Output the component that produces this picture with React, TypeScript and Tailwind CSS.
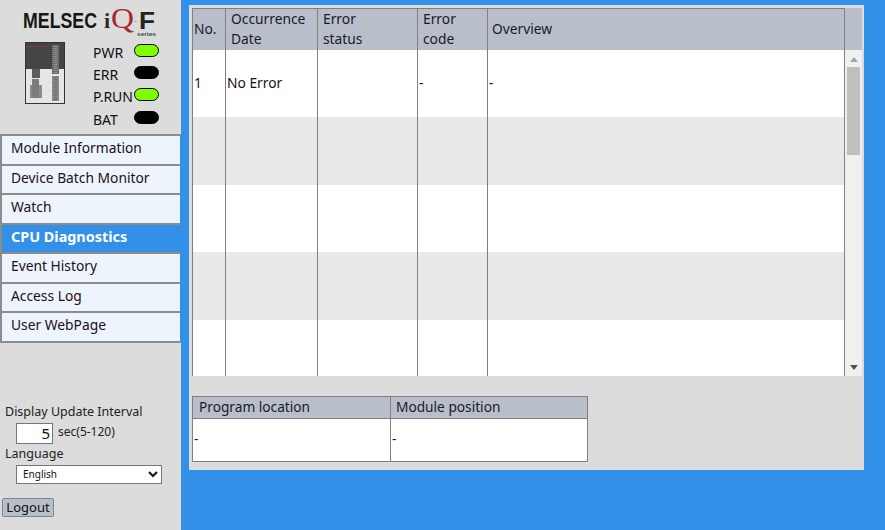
const headers = ['No.', 'Occurrence Date', 'Error status', 'Error code', 'Overview'];
const leds = [
  { label: 'PWR', on: true },
  { label: 'ERR', on: false },
  { label: 'P.RUN', on: true },
  { label: 'BAT', on: false },
];
const menu = ['Module Information', 'Device Batch Monitor', 'Watch', 'CPU Diagnostics', 'Event History', 'Access Log', 'User WebPage'];
const rowHeights = ['h-[67px]', 'h-[68px]', 'h-[67px]', 'h-[68px]', 'h-[56px]'];
const cols = 'grid grid-cols-[33px_92px_100px_70px_357px]';

function CpuImage() {
  return (
    <svg width="40" height="62" viewBox="0 0 40 62" className="block">
      <rect x="0.5" y="0.5" width="39" height="61" fill="#e6e6e6" stroke="#333" />
      <rect x="1" y="1" width="38" height="26" fill="#444" />
      <line x1="1" y1="4.5" x2="23" y2="4.5" stroke="#8a3a44" />
      <rect x="27" y="3" width="7" height="29" fill="#6b6b6b" />
      <line x1="30.5" y1="4" x2="30.5" y2="31" stroke="#8f8f8f" strokeWidth="4" strokeDasharray="1 1" />
      <rect x="27" y="34" width="7" height="25" fill="#8a8a8a" />
      <line x1="30.5" y1="35" x2="30.5" y2="58" stroke="#6c6c6c" strokeWidth="4" strokeDasharray="1 1" />
      <rect x="7" y="27" width="8" height="9" fill="#5c5c5c" />
      <rect x="5" y="43" width="12" height="13" fill="#8c8c8c" />
      <rect x="7" y="37" width="7" height="19" fill="#7c7c7c" />
    </svg>
  );
}

function Logo() {
  return (
    <svg width="181" height="38" viewBox="0 0 181 38" className="block shrink-0">
      <text x="23" y="28" fontFamily="Liberation Sans" fontWeight="700" fontSize="22.5" fill="#161616" textLength="74" lengthAdjust="spacingAndGlyphs">MELSEC</text>
      <text x="104" y="28" fontFamily="Liberation Serif" fontWeight="700" fontSize="22" fill="#2a2a2a">i</text>
      <text x="111" y="28" fontFamily="Liberation Serif" fontSize="29" fill="#a8262e" textLength="23" lengthAdjust="spacingAndGlyphs">Q</text>
      <text x="134" y="24" fontFamily="Liberation Sans" fontSize="9" fill="#888">-</text>
      <text x="139" y="29" fontFamily="Liberation Sans" fontWeight="700" fontSize="24" fill="#222" textLength="16" lengthAdjust="spacingAndGlyphs">F</text>
      <text x="137" y="36" fontFamily="Liberation Sans" fontWeight="700" fontSize="5.5" fill="#444" textLength="19" lengthAdjust="spacingAndGlyphs">series</text>
    </svg>
  );
}

function Sidebar() {
  return (
    <aside className="w-[181px] h-[530px] shrink-0 bg-[#dcdcdc] flex flex-col">
      <Logo />
      <div className="flex h-[96px] pt-[2px]">
        <div className="pl-[25px] pt-[2px] w-[93px]"><CpuImage /></div>
        <div className="flex flex-col">
          {leds.map((l) => (
            <div key={l.label} className="flex h-[22.2px] items-start">
              <span className="w-[41px] text-[14px] leading-[20px] pt-[3px] text-[#111]">{l.label}</span>
              <span className={`w-[25px] h-[13px] mt-[4px] rounded-[7px] border border-black ${l.on ? 'bg-[#80ff00]' : 'bg-black'}`} />
            </div>
          ))}
        </div>
      </div>
      <nav className="w-[181px] border-b-2 border-[#8c8c8c]">
        {menu.map((item) => (
          <div
            key={item}
            className={`h-[29.5px] border-t-2 border-l-2 border-r border-t-[#8c8c8c] border-l-[#8c8c8c] border-r-[#3290e8] pl-[9px] leading-[24px] ${item === 'CPU Diagnostics' ? 'bg-[#3290e8] text-white font-bold text-[14.4px]' : 'bg-[#eef4fc] text-[#1a1020] text-[13.8px]'}`}
          >
            {item}
          </div>
        ))}
      </nav>
      <div className="mt-[61px] pl-[5px] text-[12.5px] leading-[16px] text-[#222]">Display Update Interval</div>
      <div className="flex pl-[16px] mt-[3px] h-[21px]">
        <input readOnly value="5" className="w-[37px] h-[21px] bg-white border border-[#6b7886] text-right pr-[2px] text-[15px] text-[#111] outline-none" />
        <span className="ml-[5px] text-[12px] leading-[17px] text-[#222]">sec(5-120)</span>
      </div>
      <div className="mt-[2px] pl-[5px] text-[12.5px] leading-[16px] text-[#222]">Language</div>
      <div className="pl-[16px] mt-[3px] h-[19px]">
        <select className="block w-[146px] h-[19px] bg-white border border-[#6b7886] pl-[2px] text-[10px] text-[#111] outline-none">
          <option>English</option>
        </select>
      </div>
      <div className="pl-[2px] mt-[14px]">
        <button className="block w-[52px] h-[19px] bg-[#b8bfca] border border-[#7d8794] rounded-[2px] text-[13px] leading-[15px] text-[#111]">Logout</button>
      </div>
    </aside>
  );
}

function Scrollbar() {
  return (
    <div className="w-[17px] h-[326px] bg-[#f0f0f0] flex flex-col items-center">
      <svg width="8" height="5" viewBox="0 0 8 5" className="mt-[7px] shrink-0"><path d="M4 0 8 5H0z" fill="#a3a3a3" /></svg>
      <div className="mt-[5px] w-[13px] h-[88px] bg-[#bfbfbf]" />
      <svg width="8" height="5" viewBox="0 0 8 5" className="mt-auto mb-[6px] shrink-0"><path d="M0 0H8L4 5z" fill="#505050" /></svg>
    </div>
  );
}

function ErrorTable() {
  return (
    <div className="w-[670px]">
      <div className="flex">
        <div className={`${cols} w-[653px] h-[42px] bg-[#b8bfca] border-t border-r border-[#808080]`}>
          {headers.map((h, i) => (
            <div
              key={h}
              className={`border-l border-[#808080] flex items-center pb-[3px] text-[13.8px] leading-[20px] text-[#1a1a2a] ${i === 0 ? 'pl-[1px]' : i === 4 ? 'pl-[4px]' : 'pl-[5px] pr-[24px]'}`}
            >
              {h}
            </div>
          ))}
        </div>
        <div className="w-[17px] h-[42px] bg-[#b8bfca]" />
      </div>
      <div className="flex">
        <div className="w-[653px] h-[326px] overflow-hidden border-r border-[#808080]">
          {rowHeights.map((h, r) => (
            <div key={r} className={`${cols} ${h} ${r % 2 ? 'bg-[#e8e9eb]' : 'bg-white'}`}>
              {[0, 1, 2, 3, 4].map((c) => (
                <div key={c} className="border-l border-[#808080] flex items-center pl-[1px] text-[13.8px] text-[#1a1020]">
                  {r === 0 ? ['1', 'No Error', '', '-', '-'][c] : ''}
                </div>
              ))}
            </div>
          ))}
        </div>
        <Scrollbar />
      </div>
    </div>
  );
}

function DetailTable() {
  return (
    <div className="mt-[20px] w-[396px] h-[66px] border border-[#808080] text-[13.7px] text-[#1a1a2a]">
      <div className="grid grid-cols-[198px_1fr] h-[22px] bg-[#b8bfca] border-b border-[#808080] leading-[19px]">
        <div className="pl-[6px] border-r border-[#808080]">Program location</div>
        <div className="pl-[5px]">Module position</div>
      </div>
      <div className="grid grid-cols-[198px_1fr] h-[42px] bg-white">
        <div className="flex items-center pl-[1px] pb-[2px] border-r border-[#808080]">-</div>
        <div className="flex items-center pl-[1px] pb-[2px]">-</div>
      </div>
    </div>
  );
}

export default function App() {
  return (
    <div className="flex w-[885px] h-[530px] overflow-hidden bg-[#3290e8] font-['Noto_Sans',sans-serif]">
      <Sidebar />
      <main className="ml-[8px] mt-[5px] w-[675px] h-[465px] bg-[#dcdcdc] pt-[3px] pl-[3px]">
        <ErrorTable />
        <DetailTable />
      </main>
    </div>
  );
}
